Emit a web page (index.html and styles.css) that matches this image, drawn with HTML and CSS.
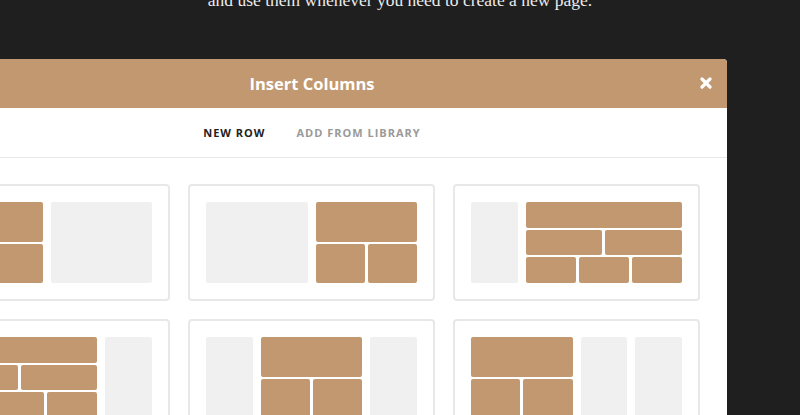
FILE: index.html
```html
<!DOCTYPE html>
<html>
<head>
<meta charset="utf-8">
<link rel="stylesheet" href="styles.css">
</head>
<body>
<p class="page-text">and use them whenever you need to create a new page.</p>
<div class="modal">
  <div class="modal-header">
    <h2 class="modal-title">Insert Columns</h2>
    <button class="close" aria-label="Close">
      <svg width="12" height="12" viewBox="0 0 12 12"><path d="M2 2 L10 10 M10 2 L2 10" stroke="#fff" stroke-width="3.2" stroke-linecap="round"/></svg>
    </button>
  </div>
  <div class="tabs">
    <span class="tab active">New Row</span>
    <span class="tab">Add from Library</span>
  </div>
  <div class="layouts">
    <div class="card"><div class="preview">
      <div class="stack span2"><div class="row"><i></i></div><div class="row"><i></i><i></i></div></div>
      <div class="empty span2"></div>
    </div></div>
    <div class="card"><div class="preview">
      <div class="empty span2"></div>
      <div class="stack span2"><div class="row"><i></i></div><div class="row"><i></i><i></i></div></div>
    </div></div>
    <div class="card"><div class="preview">
      <div class="empty"></div>
      <div class="stack span3"><div class="row"><i></i></div><div class="row"><i></i><i></i></div><div class="row"><i></i><i></i><i></i></div></div>
    </div></div>
    <div class="card"><div class="preview">
      <div class="stack span3"><div class="row"><i></i></div><div class="row"><i></i><i></i></div><div class="row"><i></i><i></i><i></i></div></div>
      <div class="empty"></div>
    </div></div>
    <div class="card"><div class="preview">
      <div class="empty"></div>
      <div class="stack span2"><div class="row"><i></i></div><div class="row"><i></i><i></i></div></div>
      <div class="empty"></div>
    </div></div>
    <div class="card"><div class="preview">
      <div class="stack span2"><div class="row"><i></i></div><div class="row"><i></i><i></i></div></div>
      <div class="empty"></div>
      <div class="empty"></div>
    </div></div>
  </div>
</div>
</body>
</html>
```
FILE: styles.css
```css
html, body {
  margin: 0;
  padding: 0;
}
body {
  background: #1f1f1f;
  width: 800px;
  height: 415px;
  overflow: hidden;
  position: relative;
}
.page-text {
  margin: -10px 0 0;
  font-family: "Liberation Serif", "Times New Roman", serif;
  font-size: 17.5px;
  line-height: 20px;
  color: #ececec;
  text-align: center;
}
.modal {
  position: absolute;
  left: -103px;
  top: 59px;
  width: 830px;
  background: #fff;
  border-radius: 4px 4px 0 0;
  font-family: "Open Sans", "Liberation Sans", sans-serif;
}
.modal-header {
  height: 49px;
  background: #c1986f;
  border-radius: 4px 4px 0 0;
  display: flex;
  align-items: center;
  justify-content: center;
  position: relative;
}
.modal-title {
  margin: 0;
  color: #fff;
  font-size: 16.5px;
  font-weight: 700;
  line-height: 24px;
}
.close {
  position: absolute;
  right: 15px;
  top: 18px;
  width: 12px;
  height: 12px;
  padding: 0;
  border: 0;
  background: none;
  display: flex;
}
.tabs {
  height: 49px;
  border-bottom: 1px solid #e8e8e8;
  display: flex;
  align-items: center;
  justify-content: center;
  gap: 31px;
}
.tab {
  font-size: 11px;
  font-weight: 700;
  text-transform: uppercase;
  letter-spacing: 1px;
  color: #9a9a9a;
  line-height: 16px;
}
.tab.active {
  color: #222;
}
.layouts {
  padding: 26px;
  display: grid;
  grid-template-columns: repeat(3, 247px);
  gap: 18px;
}
.card {
  border: 2px solid #e8e8e8;
  border-radius: 4px;
  padding: 16px;
  height: 81px;
}
.preview {
  display: grid;
  grid-template-columns: repeat(4, 1fr);
  gap: 8px;
  height: 81px;
}
.span2 { grid-column: span 2; }
.span3 { grid-column: span 3; }
.empty {
  background: #f0f0f0;
  border-radius: 2px;
}
.stack {
  display: flex;
  flex-direction: column;
  gap: 2px;
}
.row {
  flex: 1;
  display: flex;
  gap: 3px;
}
.row i {
  flex: 1;
  background: #c1986f;
  border-radius: 2px;
}
```
